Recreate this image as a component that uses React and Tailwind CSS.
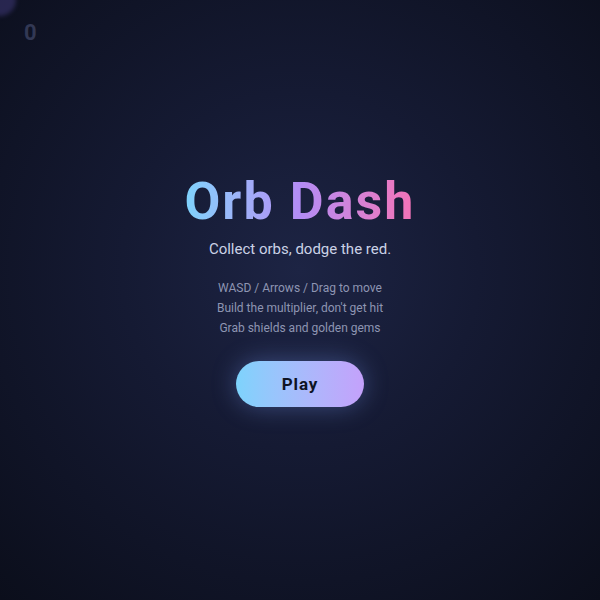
import React from 'react';

export default function App() {
  return (
    <div
      className="relative h-screen w-full overflow-hidden bg-[radial-gradient(circle_at_50%_45%,#1d2444_0%,#151a33_40%,#0b0e1b_100%)] text-white"
      style={{ fontFamily: 'Roboto, "Noto Sans", sans-serif' }}
    >
      {/* faint orb peeking in the corner */}
      <div className="absolute -left-4 -top-4 h-8 w-8 rounded-full bg-[#3a3570] opacity-60 blur-[2px]" />
      <div className="absolute left-[24px] top-[16px] text-[22px] font-bold text-[#323854]">0</div>

      <div className="flex h-full flex-col items-center justify-center pb-[22px]">
        <h1 className="bg-gradient-to-r from-[#7dd3fc] via-[#b38cf5] to-[#f472b6] bg-clip-text text-[52px] font-bold leading-[62px] tracking-[0.04em] text-transparent">
          Orb Dash
        </h1>
        <p className="mt-[5px] text-[15px] text-[#cbd2e6]">Collect orbs, dodge the red.</p>
        <div className="mt-[18px] flex flex-col items-center text-[12px] leading-[20px] text-[#8e95b2]">
          <span>WASD / Arrows / Drag to move</span>
          <span>Build the multiplier, don't get hit</span>
          <span>Grab shields and golden gems</span>
        </div>
        <button className="mt-[23px] h-[46px] w-[128px] rounded-full bg-gradient-to-r from-[#7dd3fc] to-[#c4a1fb] text-[17px] font-bold tracking-[0.05em] text-[#0f1424] shadow-[0_0_24px_rgba(125,160,252,0.35)]">
          Play
        </button>
      </div>
    </div>
  );
}
